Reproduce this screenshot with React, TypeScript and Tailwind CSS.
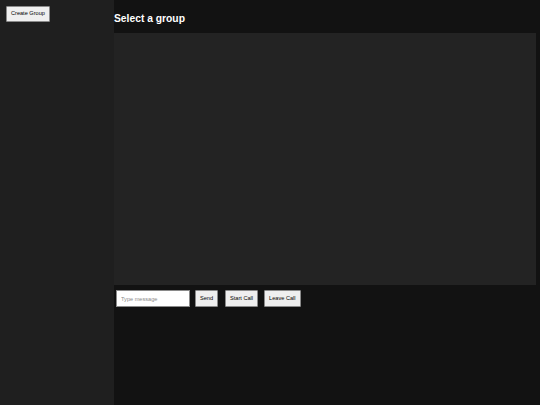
export default function App() {
  const btn =
    "block h-[17px] px-[4px] border border-[#8a8a8a] bg-[#efefef] text-black text-[5.6px] leading-none rounded-[1px]";

  return (
    <div className="flex h-[405px] w-[540px] overflow-hidden font-['Liberation_Sans',Arial,sans-serif]">
      <aside className="w-[114px] shrink-0 bg-[#1f1f1f] p-[6px]">
        <button className={`${btn} !h-[16px]`}>Create Group</button>
      </aside>

      <main className="flex flex-1 flex-col bg-[#121212]">
        <div className="h-[33px] pt-[13px]">
          <h2 className="text-[10.3px] font-bold leading-[12px] text-white">Select a group</h2>
        </div>

        <div className="mr-[4px] h-[252px] bg-[#232323]" />

        <div className="mt-[5px] flex items-center pl-[2px]">
          <input
            className="h-[17px] w-[74px] border border-[#8a8a8a] bg-white px-[4px] text-[5.6px] text-black outline-none placeholder:text-[#8a8a8a]"
            placeholder="Type message"
          />
          <button className={`${btn} ml-[5px]`}>Send</button>
          <button className={`${btn} ml-[7px]`}>Start Call</button>
          <button className={`${btn} ml-[6px]`}>Leave Call</button>
        </div>
      </main>
    </div>
  );
}
